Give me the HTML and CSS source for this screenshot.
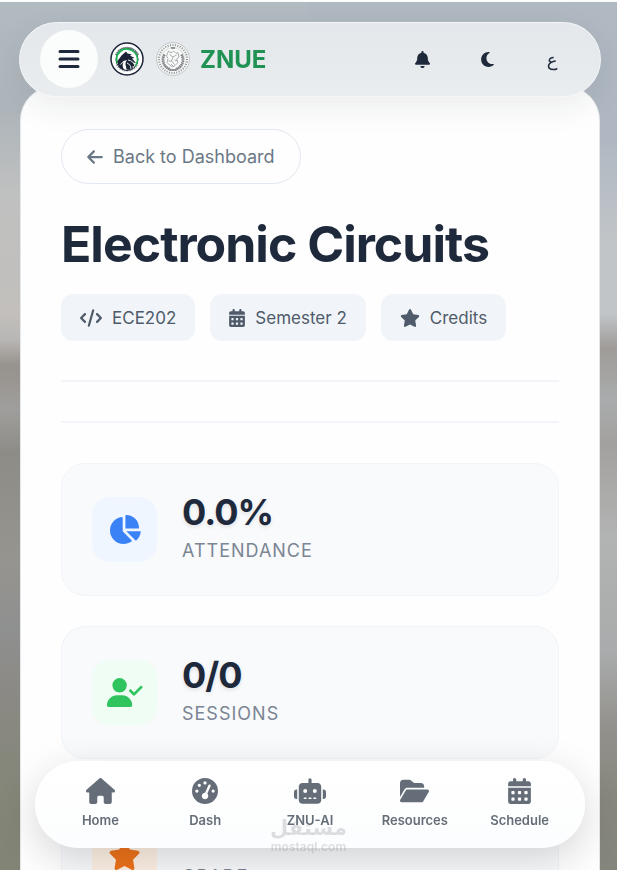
FILE: index.html
```html
<!DOCTYPE html>
<html lang="en">
<head>
	<meta charset="UTF-8">
	<meta name="viewport" content="width=device-width, initial-scale=1.0">
	<title>ZNUE - Electronic Circuits</title>
	<link rel="stylesheet" href="styles.css">
</head>
<body>

	<!-- icons -->
	<svg class="sprite" aria-hidden="true">
		<symbol id="i-calendar" viewBox="0 0 448 512">
			<path d="M128 0c17.7 0 32 14.3 32 32l0 32 128 0 0-32c0-17.7 14.3-32 32-32s32 14.3 32 32l0 32 48 0c26.500 0 48 21.500 48 48l0 48L0 160l0-48C0 85.500 21.500 64 48 64l48 0 0-32c0-17.700 14.300-32 32-32zM0 192l448 0 0 272c0 26.500-21.500 48-48 48L48 512c-26.500 0-48-21.500-48-48L0 192zm64 80l0 32q0 16 16 16l32 0q16 0 16-16l0-32q0-16-16-16l-32 0q-16 0-16 16zm128 0l0 32q0 16 16 16l32 0q16 0 16-16l0-32q0-16-16-16l-32 0q-16 0-16 16zm128 0l0 32q0 16 16 16l32 0q16 0 16-16l0-32q0-16-16-16l-32 0q-16 0-16 16zM64 400l0 32q0 16 16 16l32 0q16 0 16-16l0-32q0-16-16-16l-32 0q-16 0-16 16zm128 0l0 32q0 16 16 16l32 0q16 0 16-16l0-32q0-16-16-16l-32 0q-16 0-16 16zm128 0l0 32q0 16 16 16l32 0q16 0 16-16l0-32q0-16-16-16l-32 0q-16 0-16 16z" fill-rule="evenodd"/>
		</symbol>
		<symbol id="i-star" viewBox="0 0 576 512">
			<path d="M316.900 18C311.600 7 300.400 0 288.100 0s-23.400 7-28.800 18L195 150.300 51.400 171.500c-12 1.800-22 10.200-25.700 21.700s-.7 24.200 7.900 32.700L137.800 329 113.200 474.700c-2 12 3 24.200 12.900 31.300s23 8 33.800 2.300l128.300-68.500 128.300 68.500c10.800 5.700 23.900 4.900 33.800-2.300s14.900-19.300 12.900-31.300L438.500 329 542.700 225.900c8.600-8.500 11.700-21.200 7.900-32.700s-13.700-19.900-25.700-21.700L381.200 150.300 316.900 18z"/>
		</symbol>
	</svg>

	<header class="topbar">
		<button class="menu-btn" type="button" aria-label="Menu">
			<svg width="22" height="20" viewBox="0 0 22 20" fill="none" stroke="currentColor" stroke-width="3" stroke-linecap="round">
				<path d="M2 2.500h18M2 10h18M2 17.500h18"/>
			</svg>
		</button>
		<a class="brand" href="#">
			<svg class="logo" viewBox="0 0 68 68" aria-hidden="true">
				<circle cx="34" cy="34" r="32" fill="#fff" stroke="#1b2336" stroke-width="3"/>
				<path d="M12 26a24 24 0 0 1 44 0" fill="none" stroke="#5b6270" stroke-width="4" stroke-dasharray="3 1"/>
				<path d="M12 46a26 26 0 0 0 44 0" fill="none" stroke="#b3b8bf" stroke-width="3" stroke-dasharray="3 2"/>
				<circle cx="34" cy="35" r="22" fill="#fff" stroke="#1b2336" stroke-width="2"/>
				<path d="M15 42a20 20 0 0 1 29-25" fill="none" stroke="#22b455" stroke-width="4"/>
				<path d="M44 17a20 20 0 0 1 5 32" fill="none" stroke="#22b455" stroke-width="3"/>
				<path d="M15 38l8-11 9-8 3 4 9 2-4 2 9 5-5 1 8 9-6-1 6 9-7-2 1 5c-5 3-9 3-13 2l-1-6c-2-5-1-9 2-13l-7 2-6 6-5 2zM16 44l6 1 5-5c-3 6-2 11 2 16-7-2-12-5-13-12z" fill="#1b2336"/>
				<path d="M36 36c8 1 13 6 14 13M34 42c5 2 8 6 8 12" fill="none" stroke="#e5ede9" stroke-width="2"/>
			</svg>
			<svg class="logo" viewBox="0 0 68 68" aria-hidden="true">
				<circle cx="34" cy="34" r="33" fill="#f4f5f5" stroke="#c3c8ca" stroke-width="2"/>
				<circle cx="34" cy="34" r="28" fill="none" stroke="#8c9092" stroke-width="4" stroke-dasharray="2 3"/>
				<circle cx="34" cy="34" r="23" fill="#fafafa" stroke="#b4b8ba" stroke-width="1"/>
				<path d="M17 25c-6 12-2 25 12 30M51 25c6 12 2 25-12 30" fill="none" stroke="#777b7d" stroke-width="5" stroke-dasharray="3 1"/>
				<path d="M25 18l5 4 5-4 5 5 4-2 2 9-5 4 3 7-6 6-5 3-6-4-5-5 2-8-3-5zM27 25l7 5 7-4M34 30l-3 8 6 7M25 38l6 0M37 36l6 2M30 44l4 4" fill="none" stroke="#a9adaf" stroke-width="2"/>
				<path d="M30 12h8M27 56h14" stroke="#777b7d" stroke-width="3"/>
			</svg>
			<span class="brand-name">ZNUE</span>
		</a>
		<div class="actions">
			<button class="action-btn" type="button" aria-label="Notifications">
				<svg width="15" height="17" viewBox="0 0 448 512" fill="currentColor"><path d="M224 0c-17.700 0-32 14.300-32 32l0 19.200C119 66 64 130.600 64 208l0 18.800c0 47-17.300 92.400-48.500 127.600l-7.400 8.300c-8.400 9.400-10.400 22.900-5.300 34.400S19.400 416 32 416l384 0c12.600 0 24-7.400 29.200-18.900s3.100-25-5.300-34.400l-7.400-8.300C401.300 319.200 384 273.900 384 226.800l0-18.800c0-77.400-55-142-128-156.800L256 32c0-17.700-14.300-32-32-32zm45.300 493.300c12-12 18.700-28.300 18.700-45.300l-64 0-64 0c0 17 6.700 33.300 18.700 45.300s28.300 18.700 45.300 18.700s33.300-6.700 45.300-18.700z"/></svg>
			</button>
			<button class="action-btn" type="button" aria-label="Dark mode">
				<svg width="13" height="17" viewBox="0 0 384 512" fill="currentColor"><path d="M223.500 32C100 32 0 132.300 0 256S100 480 223.500 480c60.600 0 115.500-24.200 155.800-63.400c5-4.900 6.300-12.500 3.100-18.700s-10.100-9.700-17-8.500c-9.800 1.700-19.800 2.600-30.100 2.600c-96.900 0-175.500-78.800-175.500-176c0-65.800 36-123.100 89.300-153.300c6.100-3.500 9.200-10.500 7.700-17.300s-7.300-11.900-14.300-12.500c-6.300-.5-12.600-.8-19-.8z"/></svg>
			</button>
			<button class="action-btn lang" type="button" lang="ar">ع</button>
		</div>
	</header>

	<main class="course">
		<a class="back" href="#">
			<svg width="16" height="18" viewBox="0 0 448 512" fill="currentColor"><path d="M9.400 233.400c-12.500 12.500-12.500 32.800 0 45.300l160 160c12.500 12.500 32.800 12.500 45.300 0s12.500-32.800 0-45.300L109.200 288 416 288c17.700 0 32-14.300 32-32s-14.300-32-32-32l-306.700 0L214.600 118.600c12.500-12.500 12.500-32.800 0-45.300s-32.800-12.500-45.300 0l-160 160z"/></svg>
			Back to Dashboard
		</a>

		<h1>Electronic Circuits</h1>

		<div class="chips">
			<span class="chip">
				<svg width="22" height="18" viewBox="0 0 640 512" fill="currentColor"><path d="M392.800 1.200c-17-4.900-34.700 5-39.600 22l-128 448c-4.900 17 5 34.700 22 39.600s34.700-5 39.600-22l128-448c4.900-17-5-34.700-22-39.600zm80.600 120.100c-12.500 12.500-12.500 32.800 0 45.300L562.700 256l-89.400 89.400c-12.500 12.500-12.500 32.800 0 45.300s32.800 12.500 45.300 0l112-112c12.500-12.500 12.500-32.800 0-45.300l-112-112c-12.500-12.500-32.800-12.500-45.300 0zm-306.700 0c-12.500-12.500-32.800-12.500-45.300 0l-112 112c-12.500 12.500-12.500 32.800 0 45.300l112 112c12.500 12.500 32.800 12.500 45.300 0s12.500-32.800 0-45.300L77.300 256l89.400-89.400c12.500-12.500 12.500-32.800 0-45.300z"/></svg>
				ECE202
			</span>
			<span class="chip">
				<svg width="16" height="18" fill="currentColor"><use href="#i-calendar"/></svg>
				Semester 2
			</span>
			<span class="chip">
				<svg width="20" height="18" fill="currentColor"><use href="#i-star"/></svg>
				Credits
			</span>
		</div>

		<hr>
		<hr>

		<section class="stats">
			<div class="card">
				<div class="tile blue">
					<svg width="33" height="29" viewBox="0 0 576 512" fill="currentColor"><path d="M304 240l0-223.400c0-9 7-16.600 16-16.600C443.700 0 544 100.300 544 224c0 9-7.600 16-16.600 16L304 240zM32 272C32 150.700 122.100 50.300 239 34.300c9.200-1.300 17 6.100 17 15.400L256 288 412.500 444.500c6.700 6.700 6.200 17.700-1.500 23.100C371.800 495.600 323.800 512 272 512C139.500 512 32 404.600 32 272zm526.400 16c9.300 0 16.600 7.800 15.400 17c-7.700 55.900-34.600 105.600-73.900 142.300c-6 5.600-15.400 5.200-21.200-.7L320 288l238.400 0z"/></svg>
				</div>
				<div>
					<div class="value">0.0%</div>
					<div class="label">Attendance</div>
				</div>
			</div>
			<div class="card">
				<div class="tile green">
					<svg width="36" height="29" viewBox="0 0 640 512" fill="currentColor"><path d="M96 128a128 128 0 1 1 256 0A128 128 0 1 1 96 128zM0 482.300C0 383.800 79.800 304 178.300 304l91.400 0C368.200 304 448 383.800 448 482.300c0 16.400-13.300 29.700-29.700 29.700L29.700 512C13.300 512 0 498.700 0 482.300zM625 177L497 305c-9.400 9.400-24.600 9.400-33.900 0l-64-64c-9.400-9.400-9.400-24.600 0-33.900s24.600-9.400 33.900 0l47 47L591 143c9.400-9.400 24.600-9.400 33.900 0s9.400 24.600 0 33.900z"/></svg>
				</div>
				<div>
					<div class="value">0/0</div>
					<div class="label">Sessions</div>
				</div>
			</div>
			<div class="card">
				<div class="tile orange">
					<svg width="33" height="29" fill="currentColor"><use href="#i-star"/></svg>
				</div>
				<div>
					<div class="value">-</div>
					<div class="label">Grade</div>
				</div>
			</div>
		</section>
	</main>

	<nav class="bottom-nav">
		<a href="#">
			<svg width="29" height="26" viewBox="0 0 576 512" fill="currentColor"><path d="M575.800 255.500c0 18-15 32.100-32 32.100l-32 0 .7 160.200c0 2.700-.2 5.400-.5 8.100l0 16.200c0 22.100-17.900 40-40 40l-16 0c-1.100 0-2.200 0-3.300-.1c-1.400 .1-2.800 .1-4.200 .1L416 512l-24 0c-22.100 0-40-17.900-40-40l0-24 0-64c0-17.700-14.300-32-32-32l-64 0c-17.700 0-32 14.300-32 32l0 64 0 24c0 22.100-17.900 40-40 40l-24 0-31.900 0c-1.500 0-3-.1-4.500-.2c-1.200 .1-2.400 .2-3.600 .2l-16 0c-22.100 0-40-17.900-40-40l0-112c0-.9 0-1.900 .1-2.800l0-69.700-32 0c-18 0-32-14-32-32.100c0-9 3-17 10-24L266.400 8c7-7 15-8 22-8s15 2 21 7L564.800 231.500c8 7 12 15 11 24z"/></svg>
			Home
		</a>
		<a href="#">
			<svg width="26" height="26" viewBox="0 0 512 512" fill="currentColor"><path fill-rule="evenodd" d="M0 256a256 256 0 1 1 512 0A256 256 0 1 1 0 256zM288 96a32 32 0 1 0 -64 0 32 32 0 1 0 64 0zM256 416c35.300 0 64-28.700 64-64c0-17.400-6.900-33.100-18.100-44.600L366 161.700c5.300-12.100-.2-26.300-12.300-31.600s-26.300 .2-31.600 12.300L257.900 288c-.6 0-1.300 0-1.900 0c-35.300 0-64 28.700-64 64s28.700 64 64 64zM176 144a32 32 0 1 0 -64 0 32 32 0 1 0 64 0zM96 288a32 32 0 1 0 0-64 32 32 0 1 0 0 64zm352-32a32 32 0 1 0 -64 0 32 32 0 1 0 64 0z"/></svg>
			Dash
		</a>
		<a href="#">
			<svg width="32" height="26" viewBox="0 0 640 512" fill="currentColor"><path fill-rule="evenodd" d="M320 0c17.700 0 32 14.300 32 32l0 64 120 0c39.800 0 72 32.200 72 72l0 272c0 39.800-32.200 72-72 72l-304 0c-39.800 0-72-32.200-72-72l0-272c0-39.800 32.200-72 72-72l120 0 0-64c0-17.700 14.300-32 32-32zM208 384a16 16 0 0 0 0 32l32 0a16 16 0 0 0 0-32zm96 0a16 16 0 0 0 0 32l32 0a16 16 0 0 0 0-32zm96 0a16 16 0 0 0 0 32l32 0a16 16 0 0 0 0-32zM264 256a40 40 0 1 0 -80 0 40 40 0 1 0 80 0zm152 40a40 40 0 1 0 0-80 40 40 0 1 0 0 80zM48 224l16 0 0 192-16 0c-26.500 0-48-21.500-48-48l0-96c0-26.500 21.500-48 48-48zm544 0c26.500 0 48 21.500 48 48l0 96c0 26.500-21.500 48-48 48l-16 0 0-192 16 0z"/></svg>
			ZNU-AI
		</a>
		<a href="#">
			<svg width="29" height="26" viewBox="0 0 576 512" fill="currentColor"><path d="M88.700 223.800L0 375.800 0 96C0 60.700 28.700 32 64 32l117.500 0c17 0 33.300 6.700 45.300 18.700l26.500 26.500c12 12 28.300 18.700 45.300 18.700L416 96c35.300 0 64 28.700 64 64l0 32-336 0c-22.800 0-43.800 12.100-55.300 31.800zm27.600 16.100C122.100 230 132.600 224 144 224l400 0c11.500 0 22 6.100 27.700 16.100s5.700 22.200-.1 32.100l-112 192C453.900 474 443.400 480 432 480L32 480c-11.500 0-22-6.100-27.700-16.100s-5.700-22.200 .1-32.100l112-192z"/></svg>
			Resources
		</a>
		<a href="#">
			<svg width="23" height="26" fill="currentColor"><use href="#i-calendar"/></svg>
			Schedule
		</a>
	</nav>

	<div class="watermark">
		<span class="mark-ar" lang="ar">مستقل</span>
		<span class="mark-en">mostaql.com</span>
	</div>

</body>
</html>
```

FILE: styles.css
```css
* {
	box-sizing: border-box;
}

body {
	margin: 0;
	height: 100vh;
	overflow: hidden;
	padding: 84px 17px 0 20px;
	border-top: 2px solid #fbfcfc;
	font-family: Inter, "Liberation Sans", sans-serif;
	color: #1e293b;
	/* blurred campus photo, left half over the right one */
	background:
		linear-gradient(#b2bac2, #aeb5ba 13%, #bfc0c0 22%, #c2bfbc 36%, #b9b7b5 39%, #96928d 42%, #a09e9c 47%, #8e8c87 52%, #96948f 64%, #8f9090 72%, #8b8984 80%, #85877a 89%, #828475) left / 50% 100% no-repeat,
		linear-gradient(#b0b8c1, #afb8c2 16%, #c1c5c8 28%, #c1c5c8 36%, #9f9c98 40%, #a9abac 46%, #a3a19f 51%, #b2b4b3 62%, #a9abac 75%, #92908b 84%, #87877d 92%, #84857b) right / 100% 100% no-repeat;
}

a {
	text-decoration: none;
}

svg {
	display: block;
	flex-shrink: 0;
}

.sprite {
	position: absolute;
	width: 0;
	height: 0;
}

/* top bar */
.topbar {
	position: fixed;
	z-index: 10;
	top: 22px;
	left: 19px;
	right: 16px;
	display: flex;
	align-items: center;
	height: 75px;
	padding: 0 19px 1px 20px;
	border: 1px solid #f4f6f8;
	border-radius: 38px;
	background: linear-gradient(#e4e7eb, #e9edef);
	box-shadow: 0 10px 32px rgba(31, 41, 55, 0.08);
}

button {
	display: flex;
	align-items: center;
	justify-content: center;
	width: 58px;
	height: 58px;
	padding: 0;
	border: 0;
	border-radius: 50%;
	background: none;
	color: #1e293b;
	font-family: inherit;
}

.menu-btn {
	background: #fbfcfc;
}

.brand {
	display: flex;
	align-items: center;
	gap: 12px;
	margin-left: 12px;
	color: #1f9254;
}

.logo {
	width: 34px;
	height: 34px;
}

.brand-name {
	font-size: 24px;
	font-weight: 700;
	margin-left: -2px;
}

.actions {
	display: flex;
	gap: 7px;
	margin-left: auto;
}

.lang {
	font-family: "DejaVu Sans", sans-serif;
	font-size: 18px;
}

/* course panel */
.course {
	min-height: 100%;
	padding: 42px 40px;
	border: 1px solid #e3e7ea;
	border-radius: 34px 34px 0 0;
	background: #fefefe;
}

.back {
	display: inline-flex;
	align-items: center;
	gap: 10px;
	height: 55px;
	padding: 0 25px;
	border: 1px solid #e2e8f0;
	border-radius: 28px;
	color: #6b7886;
	font-size: 18px;
}

h1 {
	margin: 28px 0 18px;
	font-size: 50px;
	line-height: 64px;
	font-weight: 700;
	letter-spacing: -1px;
}

.chips {
	display: flex;
	flex-wrap: wrap;
	gap: 15px;
}

.chip {
	display: flex;
	align-items: center;
	gap: 10px;
	height: 47px;
	padding: 0 19px;
	border-radius: 12px;
	background: #f1f5f9;
	color: #4f5b6a;
	font-size: 17px;
}

hr {
	height: 2px;
	margin: 39px 0 0;
	border: 0;
	background: #f1f5f9;
}

/* stats */
.stats {
	display: grid;
	gap: 30px;
	margin-top: 40px;
}

.card {
	display: flex;
	align-items: center;
	gap: 25px;
	height: 133px;
	padding: 0 30px;
	border: 1px solid #f1f5f9;
	border-radius: 24px;
	background: #f8fafc;
}

.tile {
	display: flex;
	align-items: center;
	justify-content: center;
	width: 65px;
	height: 65px;
	border-radius: 18px;
}

.blue {
	background: #eff6ff;
	color: #3b82f6;
}

.green {
	background: #f0fdf4;
	color: #2fc45e;
}

.orange {
	background: #fff1e4;
	color: #ee731b;
}

.value {
	font-size: 36px;
	line-height: 42px;
	font-weight: 700;
	letter-spacing: -1px;
	text-shadow: 0 2px 4px rgba(0, 0, 0, 0.1);
}

.label {
	font-size: 18px;
	line-height: 36px;
	letter-spacing: 1px;
	text-transform: uppercase;
	color: #7b8593;
}

/* bottom navigation */
.bottom-nav {
	position: fixed;
	z-index: 10;
	left: 35px;
	right: 32px;
	bottom: 22px;
	display: grid;
	grid-template-columns: repeat(5, 1fr);
	height: 87px;
	padding: 0 13px;
	border-radius: 44px;
	background: linear-gradient(#fff, #fcfdfe);
	box-shadow: 0 12px 40px rgba(0, 0, 0, 0.16);
}

.bottom-nav a {
	display: flex;
	flex-direction: column;
	align-items: center;
	gap: 7px;
	padding-top: 17px;
	color: #656e78;
	font-size: 13px;
	line-height: 18px;
	font-weight: 600;
}

.watermark {
	position: fixed;
	z-index: 20;
	left: 0;
	right: 0;
	bottom: 16px;
	display: flex;
	flex-direction: column;
	align-items: center;
	color: rgba(120, 128, 134, 0.25);
	font-weight: 600;
	pointer-events: none;
}

.mark-ar {
	font-family: "DejaVu Sans", sans-serif;
	font-size: 21px;
	line-height: 24px;
}

.mark-en {
	font-size: 12px;
	line-height: 14px;
}
```
